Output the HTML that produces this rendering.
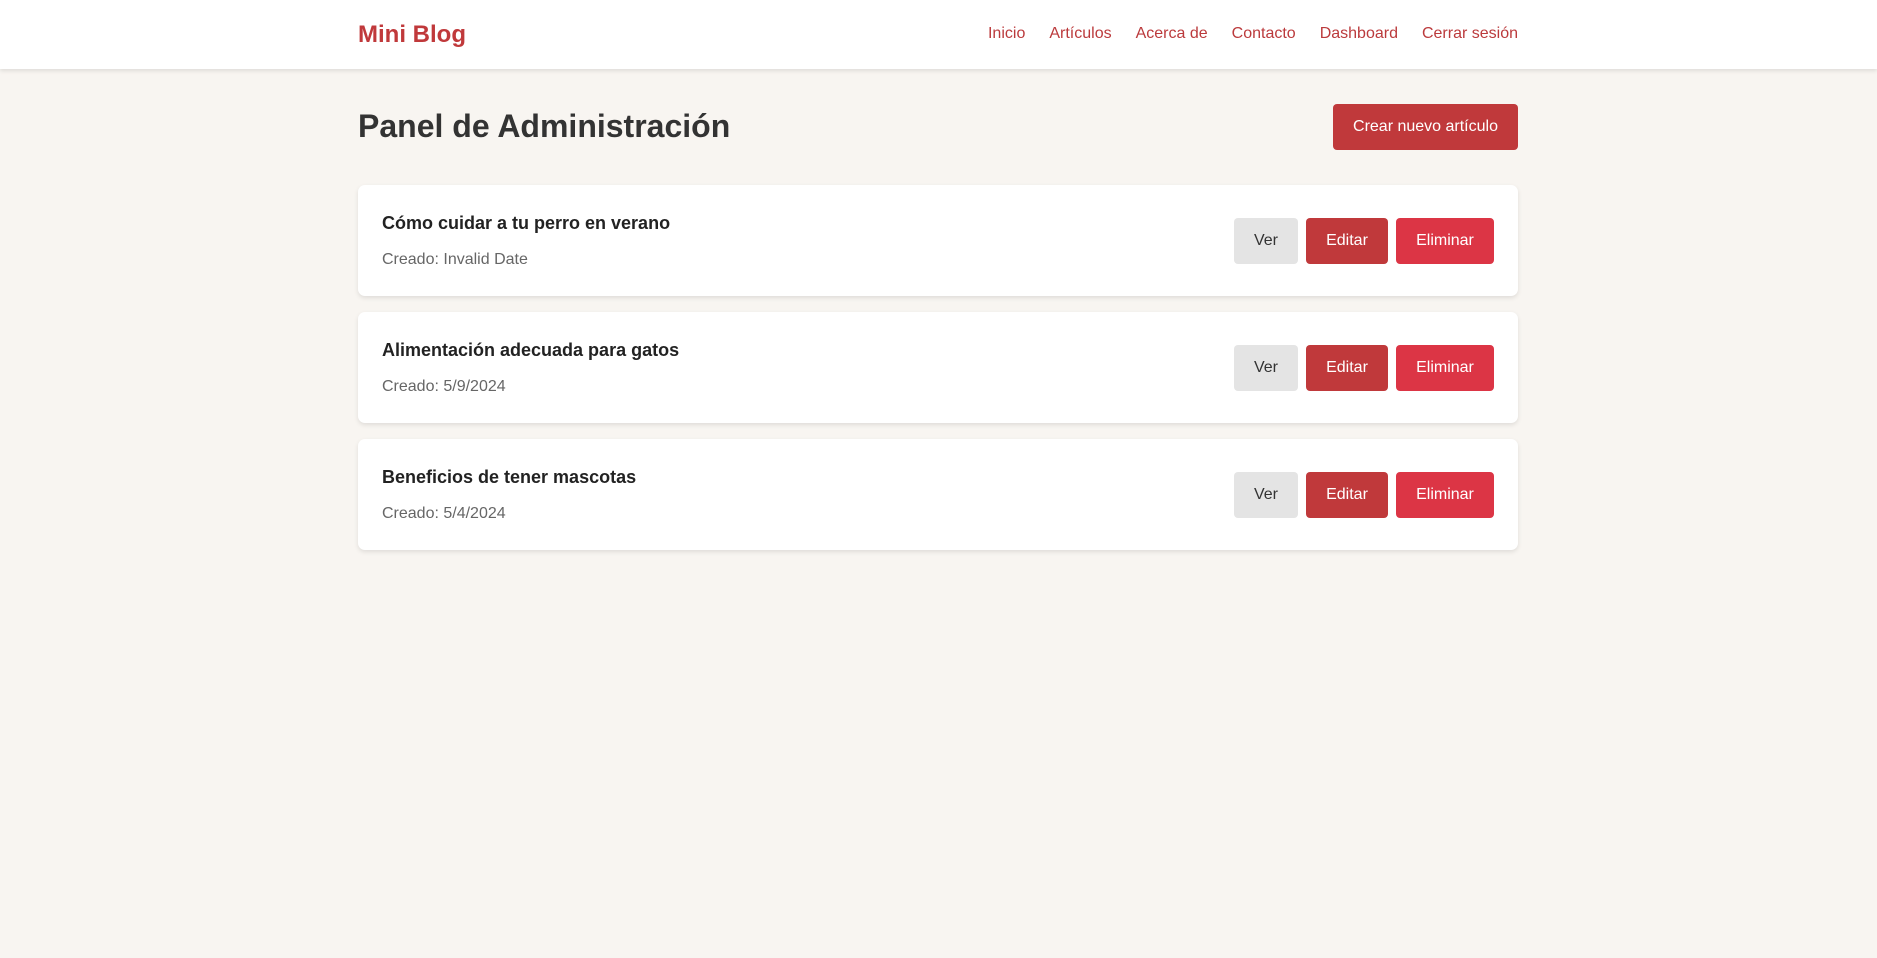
<!DOCTYPE html>
<html><head><meta charset="utf-8"><style>
*{box-sizing:border-box;margin:0;padding:0}
body{width:1877px;height:958px;background:#f8f5f1;font-family:"Liberation Sans",Arial,sans-serif;color:#333;overflow:hidden}
header{height:69px;background:#fff;box-shadow:0 2px 4px rgba(0,0,0,.1);position:relative}
.logo{position:absolute;left:358px;top:21px;font-size:24px;font-weight:bold;color:#c0393b}
nav{position:absolute;right:359px;top:25px;font-size:16px;color:#bb3a3c}
nav span{margin-left:24px}
h1{position:absolute;left:358px;top:108px;font-size:32px;font-weight:bold;color:#333}
.create{position:absolute;left:1333px;top:104px;width:185px;height:46px;background:#c0393b;color:#fff;border-radius:4px;font-size:16px;text-align:center;line-height:46px}
.card{position:absolute;left:358px;width:1160px;height:111px;background:#fff;border-radius:7px;box-shadow:0 2px 5px rgba(0,0,0,.1)}
.card h3{position:absolute;left:24px;top:28px;font-size:18px;font-weight:bold;color:#222}
.card p{position:absolute;left:24px;top:66px;font-size:16px;color:#666}
.b{position:absolute;top:33px;height:46px;border-radius:4px;font-size:16px;text-align:center;line-height:46px;color:#fff}
.ver{left:876px;width:64px;background:#e4e4e4;color:#333}
.ed{left:948px;width:82px;background:#c0393b}
.el{left:1038px;width:98px;background:#dc3545}
</style></head><body>
<header><div class="logo">Mini Blog</div>
<nav><span>Inicio</span><span>Artículos</span><span>Acerca de</span><span>Contacto</span><span>Dashboard</span><span>Cerrar sesión</span></nav></header>
<h1>Panel de Administración</h1>
<div class="create">Crear nuevo artículo</div>
<div class="card" style="top:185px"><h3>Cómo cuidar a tu perro en verano</h3><p>Creado: Invalid Date</p><div class="b ver">Ver</div><div class="b ed">Editar</div><div class="b el">Eliminar</div></div>
<div class="card" style="top:312px"><h3>Alimentación adecuada para gatos</h3><p>Creado: 5/9/2024</p><div class="b ver">Ver</div><div class="b ed">Editar</div><div class="b el">Eliminar</div></div>
<div class="card" style="top:439px"><h3>Beneficios de tener mascotas</h3><p>Creado: 5/4/2024</p><div class="b ver">Ver</div><div class="b ed">Editar</div><div class="b el">Eliminar</div></div>
</body></html>
